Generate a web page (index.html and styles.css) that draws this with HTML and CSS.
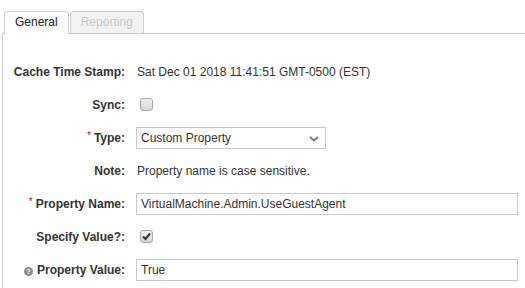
FILE: index.html
```html
<!doctype html>
<html lang="en">
<head>
  <meta charset="utf-8">
  <title>Custom Property</title>
  <link rel="stylesheet" href="styles.css">
</head>
<body>

<div class="tabs">
  <div class="tab active">General</div>
  <div class="tab disabled">Reporting</div>
</div>

<div class="panel">
  <form class="form">
    <div class="label">Cache Time Stamp:</div>
    <div class="value">Sat Dec 01 2018 11:41:51 GMT-0500 (EST)</div>

    <div class="label">Sync:</div>
    <div class="value"><span class="checkbox"></span></div>

    <div class="label"><span class="req">*</span>Type:</div>
    <div class="value">
      <div class="select">
        <span>Custom Property</span>
        <svg class="chevron" width="10" height="6" viewBox="0 0 10 6">
          <path d="M1 1 L5 4.5 L9 1" fill="none" stroke="#777" stroke-width="2"/>
        </svg>
      </div>
    </div>

    <div class="label">Note:</div>
    <div class="value">Property name is case sensitive.</div>

    <div class="label"><span class="req">*</span>Property Name:</div>
    <div class="value"><input class="text" type="text" value="VirtualMachine.Admin.UseGuestAgent"></div>

    <div class="label">Specify Value?:</div>
    <div class="value">
      <span class="checkbox">
        <svg width="11" height="11" viewBox="0 0 11 11">
          <path d="M2 5.5 L4.5 8 L9 2.5" fill="none" stroke="#333" stroke-width="2"/>
        </svg>
      </span>
    </div>

    <div class="label"><span class="help">?</span>Property Value:</div>
    <div class="value"><input class="text" type="text" value="True"></div>
  </form>
</div>

</body>
</html>
```

FILE: styles.css
```css
body {
  margin: 0;
  font-family: "Liberation Sans", Arial, sans-serif;
  font-size: 12px;
  color: #333;
  background: #fff;
  overflow: hidden;
}

.tabs {
  display: flex;
  gap: 1px;
  margin-left: 2px;
  padding: 11px 0 0 2px;
  border-bottom: 1px solid #cfcfcf;
}

.tab {
  height: 21px;
  line-height: 21px;
  padding: 0 10px;
  border: 1px solid #cfcfcf;
  border-bottom: none;
  border-radius: 4px 4px 0 0;
  margin-bottom: -1px;
  background: #fff;
  color: #222;
}

.tab.active {
  height: 22px;
}

.tab.disabled {
  padding: 0 10px;
  background: #f2f2f2;
  color: #c8c8c8;
}

.panel {
  margin-left: 2px;
  border-left: 1px solid #cfcfcf;
  padding-top: 21px;
  height: 233px;
}

.form {
  display: grid;
  grid-template-columns: 122px 1fr;
  grid-auto-rows: 33px;
  column-gap: 11px;
  align-items: center;
  padding-right: 6px;
}

.label {
  text-align: right;
  font-weight: bold;
  color: #333;
  white-space: nowrap;
}

.value {
  display: flex;
  align-items: center;
  white-space: nowrap;
  padding-left: 1px;
}

.req {
  color: #d0021b;
  font-size: 10px;
  font-weight: normal;
  vertical-align: 3px;
  margin-right: 3px;
}

.help {
  display: inline-block;
  width: 9px;
  height: 9px;
  line-height: 9px;
  border-radius: 50%;
  background: #8a8a8a;
  color: #fff;
  font-size: 7px;
  text-align: center;
  margin-right: 4px;
}

.checkbox {
  display: inline-flex;
  align-items: center;
  justify-content: center;
  width: 11px;
  height: 11px;
  margin-left: 3px;
  border: 1px solid #a9a9a9;
  border-radius: 3px;
  background: linear-gradient(#f0f0f0, #d6d6d6);
}

.select {
  position: relative;
  display: flex;
  align-items: center;
  width: 184px;
  height: 20px;
  margin-left: -1px;
  padding-left: 4px;
  border: 1px solid #c8c8c8;
  background: #fff;
}

.chevron {
  position: absolute;
  right: 6px;
  top: 8px;
}

.text {
  box-sizing: border-box;
  width: 100%;
  height: 22px;
  margin: 0 0 0 -1px;
  padding: 0 4px;
  border: 1px solid #c8c8c8;
  font-family: inherit;
  font-size: 12px;
  color: #333;
}
```
